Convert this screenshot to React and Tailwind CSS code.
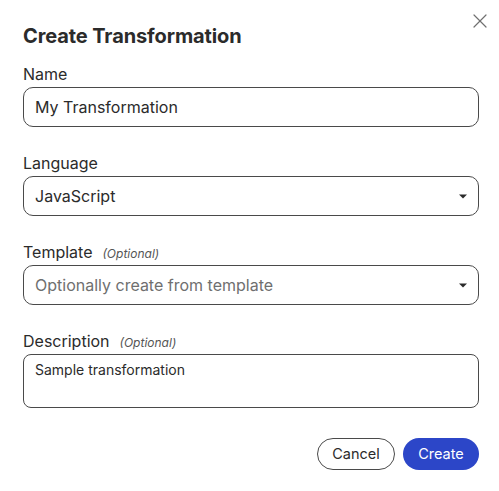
import { X } from "lucide-react";

function Caret() {
  return (
    <svg width="8" height="5" viewBox="0 0 8 5" className="shrink-0">
      <path d="M0 0.5 L8 0.5 L4 4.5 Z" fill="#2b2b2b" />
    </svg>
  );
}

function Label({ children, optional }) {
  return (
    <div className="flex items-baseline mb-[2px]">
      <span className="text-[16px] leading-[22px] text-[#2b2b2b]">{children}</span>
      {optional && <span className="ml-[10px] text-[12px] italic text-[#555]">(Optional)</span>}
    </div>
  );
}

export default function App() {
  return (
    <div
      className="w-[499px] h-[491px] bg-white relative pl-[23px] pr-[20px] pt-[22px]"
      style={{ fontFamily: "Inter, 'Noto Sans', sans-serif" }}
    >
      <button className="absolute right-[7px] top-[9px] text-[#707070]">
        <X size={24} strokeWidth={1.2} />
      </button>

      <h2 className="text-[20px] leading-[28px] font-bold tracking-[-0.1px] text-[#2b2b2b] mb-[13px]">
        Create Transformation
      </h2>

      <div className="flex flex-col gap-[25px]">
        <div>
          <Label>Name</Label>
          <div className="h-[40px] border border-[#4a4a4a] rounded-[10px] flex items-center px-[11px] text-[16px] text-[#2b2b2b]">
            My Transformation
          </div>
        </div>

        <div>
          <Label>Language</Label>
          <div className="h-[40px] border border-[#4a4a4a] rounded-[10px] flex items-center justify-between px-[11px] text-[16px] text-[#2b2b2b]">
            <span>JavaScript</span>
            <Caret />
          </div>
        </div>

        <div>
          <Label optional>Template</Label>
          <div className="h-[40px] border border-[#4a4a4a] rounded-[10px] flex items-center justify-between px-[11px] text-[16px] text-[#6f6f6f]">
            <span>Optionally create from template</span>
            <Caret />
          </div>
        </div>

        <div>
          <Label optional>Description</Label>
          <div className="h-[54px] border border-[#4a4a4a] rounded-[8px] px-[11px] pt-[4px] text-[14px] text-[#2b2b2b]">
            Sample transformation
          </div>
        </div>
      </div>

      <div className="flex justify-end gap-[8px] mt-[30px]">
        <button className="h-[32px] w-[78px] rounded-full border border-[#4a4a4a] text-[14.5px] text-[#2b2b2b] bg-white">
          Cancel
        </button>
        <button className="h-[32px] w-[76px] rounded-full bg-[#2c46c8] text-[14.5px] text-white">
          Create
        </button>
      </div>
    </div>
  );
}
